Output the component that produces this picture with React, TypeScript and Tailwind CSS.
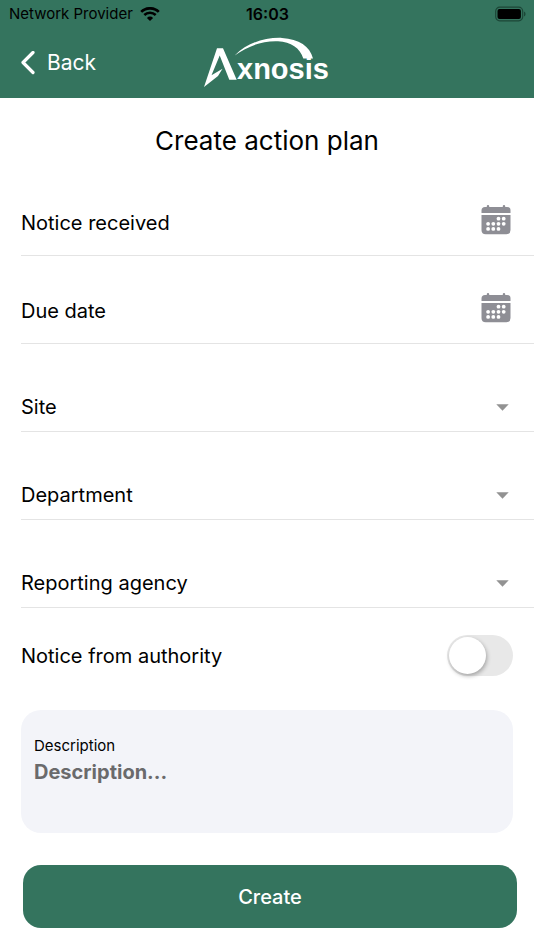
import React, { useState } from 'react';

function StatusBar() {
  return (
    <div className="grid h-7 grid-cols-3 items-center pl-[9px] pr-2 text-base text-black">
      <div className="flex items-center gap-[7px] whitespace-nowrap text-[15px]">
        <span>Network Provider</span>
        <svg width="20" height="14" viewBox="0 0 20 14" fill="none" stroke="currentColor" aria-hidden="true">
          <path d="M1.2 4.9 A12.6 12.6 0 0 1 18.8 4.9" strokeWidth="2.7" />
          <path d="M4.3 8 A8.1 8.1 0 0 1 15.7 8" strokeWidth="2.5" />
          <path d="M10 14 L6.9 10.9 A4.4 4.4 0 0 1 13.1 10.9 Z" fill="currentColor" stroke="none" />
        </svg>
      </div>
      <span className="text-center font-semibold">16:03</span>
      <svg className="justify-self-end" width="31" height="16" viewBox="0 0 31 16" aria-hidden="true">
        <rect x="0.7" y="1.2" width="27" height="13.6" rx="4" fill="none" stroke="#1c4637" strokeWidth="1.2" />
        <rect x="2.5" y="3" width="23.4" height="10" rx="2" fill="#000" />
        <path d="M29 5.6 Q30.6 6.2 30.6 8 Q30.6 9.8 29 10.4 Z" fill="#1c4637" />
      </svg>
    </div>
  );
}

function Logo() {
  return (
    <svg width="126" height="52" viewBox="0 0 126 52" fill="#fff" role="img" aria-label="Axnosis">
      <path d="M0 50 L13 11.3 H19 L32.700 42.700 H25.300 L15.700 18.500 L7.500 38.300 L18.500 31.700 L14 39 Z" />
      <path d="M30.700 18.500 C43 6 60 0.300 78 0.900 C95 2 106 9 109 21.500 L99.300 21.500 C96 11 87 5 74 4.300 C58 3.600 43 9.500 30.700 18.500 Z" />
      <text x="33" y="42" className="font-['Liberation_Sans',sans-serif] text-[29px] font-bold">
        xnosis
      </text>
    </svg>
  );
}

function CalendarIcon() {
  return (
    <svg width="30" height="30" viewBox="0 0 30 30" fill="#8e8e95" aria-hidden="true">
      <path d="M0.500 8 V5.500 Q0.500 2 4 2 H5.800 V1 Q5.800 0 7 0 Q8.200 0 8.200 1 V2 H21.800 V1 Q21.800 0 23 0 Q24.200 0 24.200 1 V2 H26 Q29.500 2 29.500 5.500 V8 Z" />
      <path d="M0.500 10 H29.500 V25 Q29.500 29.200 25.300 29.200 H4.700 Q0.500 29.200 0.500 25 Z" />
      <g fill="#fff">
        <circle cx="17.500" cy="13.700" r="1.900" />
        <circle cx="22.700" cy="13.700" r="1.900" />
        <circle cx="7.100" cy="18.800" r="1.900" />
        <circle cx="12.300" cy="18.800" r="1.900" />
        <circle cx="17.500" cy="18.800" r="1.900" />
        <circle cx="22.700" cy="18.800" r="1.900" />
        <circle cx="7.100" cy="23.900" r="1.900" />
        <circle cx="12.300" cy="23.900" r="1.900" />
        <circle cx="17.500" cy="23.900" r="1.900" />
      </g>
    </svg>
  );
}

function DateRow({ label }: { label: string }) {
  return (
    <div className="flex h-[88px] items-end justify-between border-b border-[#e4e4e4] pb-[17px] pr-[23px]">
      <span className="leading-[30px]">{label}</span>
      <button type="button" aria-label={label} className="pb-[3px]">
        <CalendarIcon />
      </button>
    </div>
  );
}

function SelectRow({ id, label }: { id: string; label: string }) {
  return (
    <div className="flex h-[88px] items-end border-b border-[#e4e4e4] pb-[9px]">
      <label htmlFor={id} className="leading-[30px]">
        {label}
      </label>
      <div className="grid h-[30px] flex-1 items-center pr-[25px]">
        <select id={id} className="col-start-1 row-start-1 h-full w-full appearance-none bg-transparent outline-none">
          <option value=""></option>
        </select>
        <svg
          className="pointer-events-none col-start-1 row-start-1 justify-self-end"
          width="13"
          height="7"
          viewBox="0 0 13 7"
          aria-hidden="true"
        >
          <path d="M0.300 0.300 H12.700 L6.500 6.700 Z" fill="#929292" />
        </svg>
      </div>
    </div>
  );
}

export default function App() {
  const [fromAuthority, setFromAuthority] = useState(false);
  const [description, setDescription] = useState('');

  return (
    <div className="min-h-screen bg-white font-['Inter',sans-serif] text-xl text-black">
      <header className="bg-[#34745e]">
        <StatusBar />
        <div className="grid h-[70px] grid-cols-[1fr_auto_1fr] items-center px-5">
          <button type="button" className="flex items-center gap-3 justify-self-start text-[21px] text-white">
            <svg width="15" height="24" viewBox="0 0 15 24" fill="none" stroke="currentColor" aria-hidden="true">
              <path d="M13 1.500 L3 11.500 L13 21.500" strokeWidth="3.2" strokeLinecap="round" strokeLinejoin="round" />
            </svg>
            Back
          </button>
          <Logo />
        </div>
      </header>

      <form className="pb-[22px]" onSubmit={(e) => e.preventDefault()}>
        <h1 className="pt-[25px] text-center text-[26px] leading-9">Create action plan</h1>

        <div className="pl-[21px] pt-[9px]">
          <DateRow label="Notice received" />
          <DateRow label="Due date" />
          <SelectRow id="site" label="Site" />
          <SelectRow id="department" label="Department" />
          <SelectRow id="agency" label="Reporting agency" />
        </div>

        {/* Authority toggle */}
        <div className="flex items-center justify-between pl-[21px] pr-[21px] pt-[27px]">
          <label htmlFor="authority">Notice from authority</label>
          <input
            id="authority"
            type="checkbox"
            role="switch"
            checked={fromAuthority}
            onChange={(e) => setFromAuthority(e.target.checked)}
            className="h-[41px] w-[66px] appearance-none rounded-full bg-[#e8e8e8] p-[2px] before:block before:size-[37px] before:rounded-full before:bg-white before:shadow-[1px_2px_4px_rgba(0,0,0,0.3)] checked:bg-[#34745e] checked:before:ml-[25px]"
          />
        </div>

        <div className="mx-[21px] mt-[34px] rounded-[20px] bg-[#f3f4f9] px-[13px] pb-4 pt-[26px]">
          <label htmlFor="description" className="block text-[15px] leading-5">
            Description
          </label>
          <textarea
            id="description"
            value={description}
            onChange={(e) => setDescription(e.target.value)}
            placeholder="Description..."
            className="block h-[61px] w-full resize-none bg-transparent pt-[2px] text-xl font-bold outline-none placeholder:text-[#6a6a6c]"
          />
        </div>

        <div className="pl-[23px] pr-[17px] pt-8">
          <button
            type="submit"
            className="h-[63px] w-full rounded-[18px] bg-[#34745e] font-medium text-white"
          >
            Create
          </button>
        </div>
      </form>
    </div>
  );
}
